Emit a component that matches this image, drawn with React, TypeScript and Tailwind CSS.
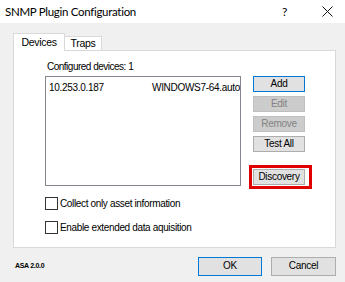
import React from "react";

const Btn = ({ label, disabled, primary }: { label: string; disabled?: boolean; primary?: boolean }) => (
  <div
    className={
      "h-[16px] w-[52px] flex items-center justify-center text-[10px] tracking-[-0.3px] leading-none border " +
      (disabled
        ? "bg-[#cccccc] border-[#bfbfbf] text-[#838383]"
        : primary
        ? "bg-[#e1e1e1] border-[#0078d7] text-black"
        : "bg-[#e1e1e1] border-[#adadad] text-black")
    }
  >
    {label}
  </div>
);

const Check = ({ label }: { label: string }) => (
  <div className="flex items-center h-[13px]">
    <div className="w-[13px] h-[13px] border border-[#333333] bg-white shrink-0" />
    <span className="ml-[2px] text-[10px] tracking-[-0.35px] leading-none text-black whitespace-nowrap">{label}</span>
  </div>
);

export default function App() {
  return (
    <div
      className="w-[345px] h-[282px] bg-[#f0f0f0] flex flex-col overflow-hidden text-black"
      style={{ fontFamily: '"Liberation Sans", Arial, sans-serif' }}
    >
      <div className="h-[23px] bg-white flex items-center pl-[5px] shrink-0">
        <span className="text-[11.5px] tracking-[-0.3px] text-black" style={{ fontFamily: 'Lato, sans-serif' }}>
          SNMP Plugin Configuration
        </span>
        <span className="ml-auto text-[12px] w-[8px] mr-[32px]" style={{ fontFamily: 'Lato, sans-serif' }}>
          ?
        </span>
        <svg width="11" height="11" viewBox="0 0 11 11" className="mr-[12px]">
          <path d="M0.5 0.5 L10.5 10.5 M10.5 0.5 L0.5 10.5" stroke="#111" strokeWidth="1" fill="none" />
        </svg>
      </div>

      <div className="flex flex-col pl-[13px] pr-[9px]">
        <div className="mt-[10px] flex items-end h-[17px] relative z-10">
          <div className="h-[18px] w-[52px] bg-white border border-b-0 border-[#d9d9d9] -mb-[1px] flex items-center justify-center text-[10.5px] tracking-[-0.3px] leading-none">
            Devices
          </div>
          <div className="h-[14px] w-[37px] bg-white border border-l-0 border-b-0 border-[#d9d9d9] flex items-center justify-center text-[10.5px] tracking-[-0.3px] leading-none">
            Traps
          </div>
        </div>
        <div className="h-[198px] border border-[#d9d9d9] bg-white flex pl-[31px]">
          <div className="flex flex-col pt-[9px] w-[196px] shrink-0">
            <div className="ml-[2px] h-[13px] text-[10px] tracking-[-0.5px] leading-[13px] whitespace-nowrap">Configured devices: 1</div>
            <div className="mt-[3px] h-[110px] border border-[#828790] bg-white overflow-hidden">
              <div className="flex text-[10px] tracking-[-0.3px] leading-[13px] pt-[4px] whitespace-nowrap">
                <span className="ml-[3px] w-[103px] shrink-0">10.253.0.187</span>
                <span className="shrink-0">WINDOWS7-64.auto</span>
              </div>
            </div>
            <div className="mt-[11px]">
              <Check label="Collect only asset information" />
            </div>
            <div className="mt-[11px]">
              <Check label="Enable extended data aquisition" />
            </div>
          </div>
          <div className="flex flex-col ml-[12px] pt-[25px] gap-[4px]">
            <Btn label="Add" primary />
            <Btn label="Edit" disabled />
            <Btn label="Remove" disabled />
            <Btn label="Test All" />
            <div className="mt-[9px] -ml-[4px] self-start border-[3px] border-[#e00000] pl-[1px] pr-[4px] py-[1px]">
              <Btn label="Discovery" />
            </div>
          </div>
        </div>
        <div className="flex items-center h-[34px]">
          <span className="ml-[2px] text-[7px] leading-none tracking-[-0.3px] font-bold">ASA 2.0.0</span>
          <div className="ml-auto mt-[2px] h-[19px] w-[64px] border border-[#0078d7] bg-[#e1e1e1] flex items-center justify-center text-[10px] tracking-[-0.3px] leading-none">
            OK
          </div>
          <div className="ml-[9px] mt-[2px] h-[19px] w-[65px] border border-[#adadad] bg-[#e1e1e1] flex items-center justify-center text-[10px] tracking-[-0.3px] leading-none">
            Cancel
          </div>
        </div>
      </div>
    </div>
  );
}
